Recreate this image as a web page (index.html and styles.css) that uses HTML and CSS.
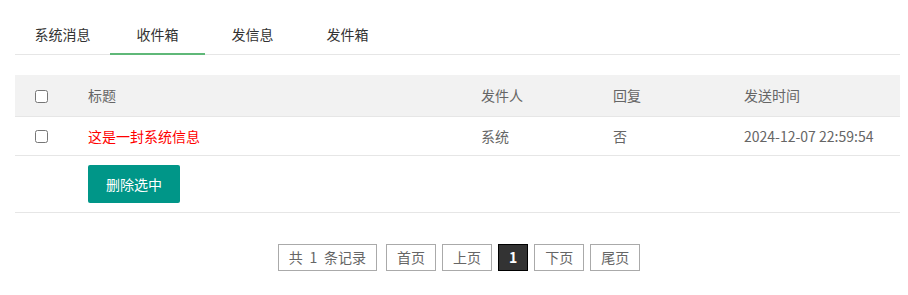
FILE: index.html
```html
<!DOCTYPE html>
<html lang="zh-CN">
<head>
<meta charset="utf-8">
<title>收件箱</title>
<link rel="stylesheet" href="styles.css">
</head>
<body>
<div class="page">
  <ul class="tabs">
    <li class="tab">系统消息</li>
    <li class="tab active">收件箱</li>
    <li class="tab">发信息</li>
    <li class="tab">发件箱</li>
  </ul>
  <table class="msg-table">
    <colgroup>
      <col class="c-check">
      <col class="c-title">
      <col class="c-from">
      <col class="c-reply">
      <col class="c-time">
    </colgroup>
    <thead>
      <tr>
        <th><input type="checkbox" class="chk"></th>
        <th>标题</th>
        <th>发件人</th>
        <th>回复</th>
        <th>发送时间</th>
      </tr>
    </thead>
    <tbody>
      <tr class="row">
        <td><input type="checkbox" class="chk"></td>
        <td><a class="msg-link" href="#">这是一封系统信息</a></td>
        <td>系统</td>
        <td>否</td>
        <td>2024-12-07 22:59:54</td>
      </tr>
      <tr class="action-row">
        <td></td>
        <td colspan="4"><button class="btn" type="button">删除选中</button></td>
      </tr>
    </tbody>
  </table>
  <div class="pager">
    <span class="pg total">共 1 条记录</span>
    <a class="pg" href="#">首页</a>
    <a class="pg" href="#">上页</a>
    <span class="pg current">1</span>
    <a class="pg" href="#">下页</a>
    <a class="pg" href="#">尾页</a>
  </div>
</div>
</body>
</html>
```
FILE: styles.css
```css
* { box-sizing: border-box; }
html, body { margin: 0; padding: 0; background: #fff; }
body {
  font-family: "Noto Sans CJK SC", "Noto Sans", sans-serif;
  font-size: 14px;
  color: #666;
}
.page { padding: 14px 8px 0 15px; }

.tabs {
  list-style: none;
  margin: 0;
  padding: 0;
  display: flex;
  height: 41px;
  border-bottom: 1px solid #e6e6e6;
}
.tab {
  position: relative;
  width: 95px;
  height: 40px;
  line-height: 40px;
  text-align: center;
  color: #333;
  cursor: pointer;
}
.tab.active::after {
  content: "";
  position: absolute;
  left: 0;
  right: 0;
  bottom: -1px;
  height: 2px;
  background: #5fb878;
}

.msg-table {
  width: 100%;
  margin-top: 20px;
  border-collapse: collapse;
  table-layout: fixed;
}
.c-check { width: 58px; }
.c-title { width: 393px; }
.c-from { width: 132px; }
.c-reply { width: 131px; }
.msg-table th,
.msg-table td {
  padding: 0 15px;
  text-align: left;
  font-weight: normal;
  line-height: 20px;
  border-bottom: 1px solid #e6e6e6;
  color: #666;
  white-space: nowrap;
}
.msg-table th { height: 41px; background: #f2f2f2; }
.msg-table .row td { height: 39px; }
.msg-table .action-row td { height: 57px; padding-top: 9px; padding-bottom: 9px; }
.msg-table th:first-child,
.msg-table td:first-child { padding-left: 20px; padding-right: 0; }
.chk {
  width: 13px;
  height: 13px;
  margin: 0;
  vertical-align: middle;
  position: relative;
  top: -1px;
}
.msg-link { color: #f00; text-decoration: none; }

.btn {
  display: inline-block;
  height: 38px;
  line-height: 38px;
  padding: 0 18px;
  border: none;
  border-radius: 2px;
  background: #009688;
  color: #fff;
  font-family: inherit;
  font-size: 14px;
  cursor: pointer;
  vertical-align: middle;
}

.pager {
  display: flex;
  justify-content: center;
  gap: 6px;
  margin-top: 31px;
  padding-left: 3px;
}
.pg {
  display: block;
  height: 27px;
  line-height: 25px;
  padding: 0 10px;
  border: 1px solid #aaa;
  color: #666;
  text-decoration: none;
  white-space: pre;
}
.pg.total { margin-right: 3px; word-spacing: 3.5px; }
.pg.current {
  background: #333;
  border-color: #000;
  color: #fff;
  font-weight: bold;
}
```
